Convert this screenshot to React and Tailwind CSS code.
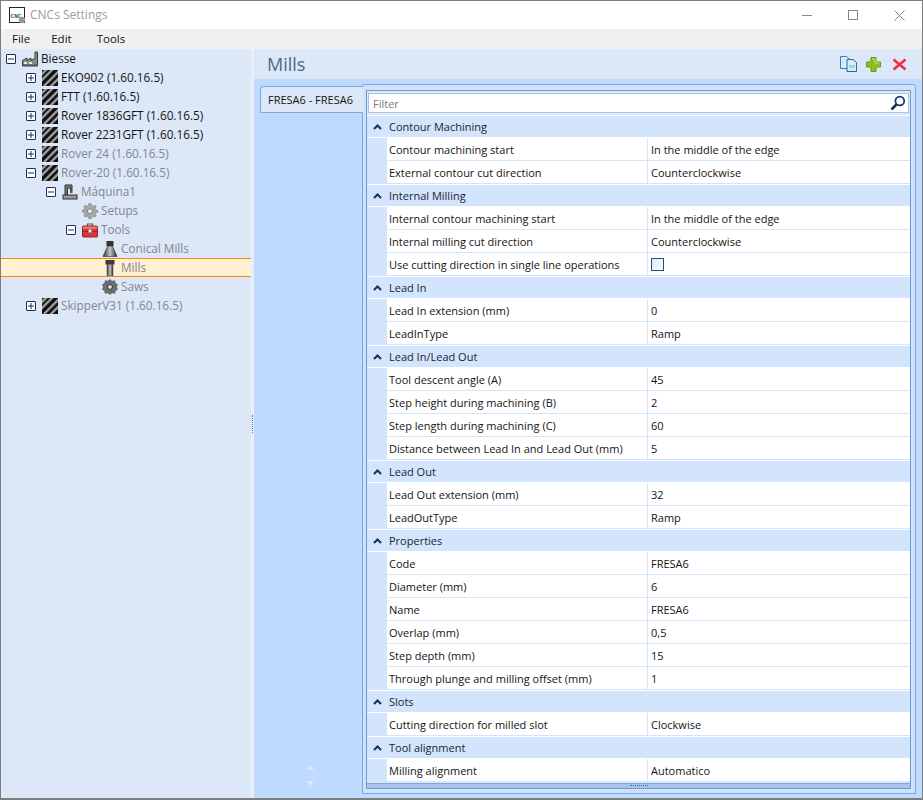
import React from "react";

const font = { fontFamily: '"Open Sans","Noto Sans",sans-serif' };

const PAD = ["pl-[5px]", "pl-[25px]", "pl-[45px]", "pl-[65px]", "pl-[85px]"];

function ExpandBox({ open }) {
  return (
    <svg width="10" height="10" viewBox="0 0 10 10" className="shrink-0">
      <rect x="0.5" y="0.5" width="9" height="9" fill="#fff" stroke="#1f2f55" strokeWidth="1" rx="0.5" />
      <rect x="2" y="4.5" width="6" height="1" fill="#1f2f55" />
      {!open && <rect x="4.5" y="2" width="1" height="6" fill="#1f2f55" />}
    </svg>
  );
}

function Striped() {
  return (
    <svg width="16" height="16" viewBox="0 0 16 16">
      <rect width="16" height="16" fill="#111" />
      <g stroke="#9a9a9a" strokeWidth="2.4">
        <path d="M-2 6 L6 -2" />
        <path d="M-2 12 L12 -2" />
        <path d="M2 16 L17 1" />
        <path d="M8 17 L17 8" />
      </g>
    </svg>
  );
}

function Factory() {
  return (
    <svg width="16" height="16" viewBox="0 0 16 16">
      <path d="M0.5 15V9.5L5 7V9.5L9 7V9.5L13 7.5V1H15.5V15Z" fill="#8a8a8a" stroke="#3c3c3c" strokeWidth="1" />
      <rect x="2" y="11" width="3" height="2" fill="#e6e6e6" />
      <rect x="7" y="11" width="3" height="2" fill="#e6e6e6" />
      <rect x="0.5" y="13.5" width="15" height="1.5" fill="#555" />
    </svg>
  );
}

function Machine() {
  return (
    <svg width="16" height="16" viewBox="0 0 16 16">
      <path d="M3 1H10V6H8.5V4H5.5V11H3Z" fill="#777" stroke="#333" strokeWidth="1" />
      <rect x="8" y="6" width="2.5" height="3" fill="#555" />
      <rect x="1" y="11" width="14" height="4" fill="#999" stroke="#333" strokeWidth="1" />
    </svg>
  );
}

function Gear() {
  return (
    <svg width="16" height="16" viewBox="0 0 16 16">
      <g fill="#a9a9a9" stroke="#7c7c7c" strokeWidth="0.7">
        <path d="M6.8 0.8H9.2L9.6 2.8L11.2 3.5L12.9 2.3L14.1 3.7L13 5.4L13.6 7L15.5 7.4V9.2L13.6 9.6L13 11.1L14.1 12.8L12.8 14.1L11.1 13L9.6 13.6L9.2 15.5H6.8L6.4 13.6L4.9 13L3.2 14.1L1.9 12.8L3 11.1L2.4 9.6L0.5 9.2V7L2.4 6.6L3 5.2L1.9 3.5L3.2 2.2L4.9 3.3L6.4 2.7Z" />
      </g>
      <circle cx="8" cy="8.2" r="2.6" fill="#e4e8ee" stroke="#777" strokeWidth="1" />
    </svg>
  );
}

function Toolbox() {
  return (
    <svg width="16" height="16" viewBox="0 0 16 16">
      <path d="M5.5 4V2H10.5V4" fill="none" stroke="#555" strokeWidth="1.2" />
      <rect x="0.5" y="4" width="15" height="11" rx="1" fill="#d8363a" stroke="#9c2226" strokeWidth="1" />
      <rect x="1" y="4.5" width="14" height="2.5" fill="#ee7075" />
      <rect x="1" y="9" width="14" height="1" fill="#a62327" />
      <rect x="6.5" y="7.5" width="3" height="3" fill="#f1f1f1" stroke="#888" strokeWidth="0.5" />
    </svg>
  );
}

function Conical() {
  return (
    <svg width="16" height="16" viewBox="0 0 16 16">
      <defs>
        <linearGradient id="cg" x1="0" x2="1">
          <stop offset="0" stopColor="#2a2a2a" />
          <stop offset="0.5" stopColor="#c4c4c4" />
          <stop offset="1" stopColor="#222" />
        </linearGradient>
      </defs>
      <rect x="4.5" y="0" width="7" height="5" fill="#333" />
      <path d="M5.5 5H10.5L15 15.5H1Z" fill="url(#cg)" stroke="#333" strokeWidth="0.6" />
    </svg>
  );
}

function Mill() {
  return (
    <svg width="16" height="16" viewBox="0 0 16 16">
      <defs>
        <linearGradient id="mg" x1="0" x2="1">
          <stop offset="0" stopColor="#333" />
          <stop offset="0.5" stopColor="#c8c8c8" />
          <stop offset="1" stopColor="#2c2c2c" />
        </linearGradient>
      </defs>
      <rect x="3.5" y="0" width="9" height="4.5" fill="#3a3a3a" />
      <rect x="5" y="4.5" width="6" height="11.5" fill="url(#mg)" stroke="#444" strokeWidth="0.5" />
    </svg>
  );
}

function Saw() {
  return (
    <svg width="16" height="16" viewBox="0 0 16 16">
      <path d="M8 0.5L10 2.2L12.7 1.8L13.2 4.3L15.5 5.6L14.4 8L15.5 10.4L13.3 11.7L12.7 14.3L10 13.8L8 15.5L6 13.8L3.3 14.3L2.7 11.7L0.5 10.4L1.6 8L0.5 5.6L2.8 4.3L3.3 1.8L6 2.2Z" fill="#6f6f6f" stroke="#444" strokeWidth="0.6" />
      <circle cx="8" cy="8" r="2.4" fill="#dfe6ef" stroke="#333" strokeWidth="1" />
    </svg>
  );
}

const ICONS = { factory: Factory, striped: Striped, machine: Machine, gear: Gear, toolbox: Toolbox, conical: Conical, mill: Mill, saw: Saw };

const TREE = [
  { l: 0, box: "open", icon: "factory", t: "Biesse" },
  { l: 1, box: "closed", icon: "striped", t: "EKO902 (1.60.16.5)" },
  { l: 1, box: "closed", icon: "striped", t: "FTT (1.60.16.5)" },
  { l: 1, box: "closed", icon: "striped", t: "Rover 1836GFT (1.60.16.5)" },
  { l: 1, box: "closed", icon: "striped", t: "Rover 2231GFT (1.60.16.5)" },
  { l: 1, box: "closed", icon: "striped", t: "Rover 24 (1.60.16.5)", dim: true },
  { l: 1, box: "open", icon: "striped", t: "Rover-20 (1.60.16.5)", dim: true },
  { l: 2, box: "open", icon: "machine", t: "Máquina1", dim: true },
  { l: 3, icon: "gear", t: "Setups", dim: true },
  { l: 3, box: "open", icon: "toolbox", t: "Tools", dim: true },
  { l: 4, icon: "conical", t: "Conical Mills", dim: true },
  { l: 4, icon: "mill", t: "Mills", dim: true, selected: true },
  { l: 4, icon: "saw", t: "Saws", dim: true },
  { l: 1, box: "closed", icon: "striped", t: "SkipperV31 (1.60.16.5)", dim: true },
];

const GROUPS = [
  ["Contour Machining", [["Contour machining start", "In the middle of the edge"], ["External contour cut direction", "Counterclockwise"]]],
  ["Internal Milling", [["Internal contour machining start", "In the middle of the edge"], ["Internal milling cut direction", "Counterclockwise"], ["Use cutting direction in single line operations", null]]],
  ["Lead In", [["Lead In extension (mm)", "0"], ["LeadInType", "Ramp"]]],
  ["Lead In/Lead Out", [["Tool descent angle (A)", "45"], ["Step height during machining (B)", "2"], ["Step length during machining (C)", "60"], ["Distance between Lead In and Lead Out (mm)", "5"]]],
  ["Lead Out", [["Lead Out extension (mm)", "32"], ["LeadOutType", "Ramp"]]],
  ["Properties", [["Code", "FRESA6"], ["Diameter (mm)", "6"], ["Name", "FRESA6"], ["Overlap (mm)", "0,5"], ["Step depth (mm)", "15"], ["Through plunge and milling offset (mm)", "1"]]],
  ["Slots", [["Cutting direction for milled slot", "Clockwise"]]],
  ["Tool alignment", [["Milling alignment", "Automatico"]]],
];

function TreeRow({ n }) {
  const Icon = ICONS[n.icon];
  return (
    <div className={`h-[19px] flex items-center text-[11.75px] ${PAD[n.l]} ${n.selected ? "bg-[#fff0d2] border-y border-[#f58a0b]" : ""}`}>
      <span className="w-[10px] h-[10px] shrink-0 flex">{n.box && <ExpandBox open={n.box === "open"} />}</span>
      <span className="ml-[6px] w-[16px] h-[16px] shrink-0 flex"><Icon /></span>
      <span className={`ml-[3px] whitespace-nowrap ${n.dim ? "text-[#85858f]" : "text-[#141414]"}`}>{n.t}</span>
    </div>
  );
}

function Group({ title, rows }) {
  return (
    <div>
      <div className="h-[23px] flex items-center bg-[#d3e5fc] border-y border-white text-[#1c2430]">
        <svg width="9" height="6" viewBox="0 0 9 6" className="ml-[6px] shrink-0">
          <path d="M1 5L4.5 1.5L8 5" fill="none" stroke="#16305e" strokeWidth="2" />
        </svg>
        <span className="ml-[7px]">{title}</span>
      </div>
      {rows.map(([k, v]) => (
        <div key={k} className="h-[23px] flex bg-[#d3e5fc]">
          <div className="w-[19px] shrink-0" />
          <div className="flex-1 flex bg-white border-l border-[#d3e5fc] border-b text-[#141414]">
            <div className="w-[261px] shrink-0 pl-[2px] flex items-center border-r border-[#d3e5fc] whitespace-nowrap overflow-hidden">{k}</div>
            <div className="flex-1 pl-[3px] flex items-center whitespace-nowrap">
              {v === null ? (
                <span className="w-[13px] h-[13px] border border-[#1c5187] bg-linear-to-br from-[#dfe5f2] to-white" />
              ) : v}
            </div>
          </div>
        </div>
      ))}
    </div>
  );
}

export default function App() {
  return (
    <div style={font} className="w-[923px] h-[800px] flex flex-col border border-[#7d7d7d] border-b-2 text-[11px] leading-none bg-white overflow-hidden">
      <div className="h-[28px] shrink-0 flex items-center bg-white">
        <svg width="17" height="17" viewBox="0 0 17 17" className="ml-[8px]">
          <rect x="0.5" y="0.5" width="15" height="15" fill="#fff" stroke="#222" />
          <text x="1.6" y="10.5" fontSize="6" fontWeight="700" fill="#127a21" fontFamily="Liberation Mono, monospace">CNC</text>
          <circle cx="13" cy="13" r="3.2" fill="#9a9a9a" />
        </svg>
        <span className="ml-[4px] text-[12px] text-[#9b9b9b]">CNCs Settings</span>
        <div className="ml-auto flex items-center">
          <div className="w-[46px] flex justify-center">
            <div className="w-[10px] h-px bg-[#8a8a8a]" />
          </div>
          <div className="w-[46px] flex justify-center">
            <div className="w-[10px] h-[10px] border border-[#8a8a8a]" />
          </div>
          <div className="w-[46px] flex justify-center">
            <svg width="11" height="11" viewBox="0 0 11 11"><path d="M0.5 0.5L10.5 10.5M10.5 0.5L0.5 10.5" stroke="#8a8a8a" /></svg>
          </div>
        </div>
      </div>

      <div className="h-[20px] shrink-0 flex items-center bg-[#f0f0f0] text-[#141414] text-[11.5px]">
        <span className="ml-[11px]">File</span>
        <span className="ml-[21px]">Edit</span>
        <span className="ml-[25px]">Tools</span>
      </div>

      <div className="flex-1 flex min-h-0">
        <div className="w-[250px] shrink-0 bg-[#dce8f7]">
          {TREE.map((n) => <TreeRow key={n.t} n={n} />)}
        </div>

        <div className="w-[3px] shrink-0 bg-[#e9eff8] flex items-center justify-center">
          <div className="h-[18px] w-px border-l border-dotted border-[#3f78c0]" />
        </div>

        <div className="flex-1 flex flex-col bg-[#bedafe] min-w-0">
          <div className="h-[30px] shrink-0 flex items-center bg-[#dce8f7]">
            <span className="ml-[13px] text-[18px] text-[#4a6a8c]">Mills</span>
            <div className="ml-auto flex items-center mr-[15px]">
              <svg width="17" height="16" viewBox="0 0 17 16">
                <path d="M0.5 0.5H6.5L9.5 3V12.5H0.5Z" fill="#d7ebf8" stroke="#2e83ba" />
                <path d="M7 3.5H13L16.5 6.5V15.5H7Z" fill="#d7ebf8" stroke="#1d6fa5" />
                <rect x="9" y="9" width="6" height="3" fill="#a7d0e8" />
              </svg>
              <svg width="15" height="15" viewBox="0 0 15 15" className="ml-[9px]">
                <path d="M5 0.5H10V5H14.5V10H10V14.5H5V10H0.5V5H5Z" fill="#8fbe21" stroke="#6d9a12" />
                <path d="M6 2H9V6H13" fill="none" stroke="#c4e56c" />
              </svg>
              <svg width="15" height="13" viewBox="0 0 15 13" className="ml-[11px]">
                <path d="M1.5 1.5L13.5 11.5M13.5 1.5L1.5 11.5" stroke="#f0303f" strokeWidth="2.6" />
              </svg>
            </div>
          </div>

          <div className="flex-1 flex min-h-0 pl-[6px] pr-[6px] pt-[5px] pb-[4px]">
            <div className="w-[102px] shrink-0 flex flex-col">
              <div className="mt-[2px] h-[27px] -mr-px relative z-10 flex items-center pl-[7px] bg-[#dce8f7] border border-r-0 border-[#7ea6da] rounded-tl-[4px] rounded-bl-[2px] text-[#141414] whitespace-nowrap">
                FRESA6 - FRESA6
              </div>
              <div className="mt-auto mb-[8px] pr-[2px] flex flex-col items-center gap-[11px]">
                <svg width="8" height="5" viewBox="0 0 8 5"><path d="M0 5L4 0L8 5Z" fill="#dbe9fb" /></svg>
                <svg width="8" height="5" viewBox="0 0 8 5"><path d="M0 0L4 5L8 0Z" fill="#dbe9fb" /></svg>
              </div>
            </div>

            <div className="flex-1 min-w-0 border border-[#7ea6da] rounded-tr-[3px] rounded-tl-[2px] bg-[#cfe2fc] pt-[5px] pl-[3px] pr-[4px] pb-[4px] flex">
              <div className="flex-1 min-w-0 border border-[#7298d0] bg-[#dce8f7] flex flex-col">
                <div className="mx-px mt-[2px] mb-[2px] h-[20px] shrink-0 flex items-center bg-white border border-[#a8c4ea] pl-[4px] text-[#7d7d7d]">
                  Filter
                  <svg width="16" height="16" viewBox="0 0 16 16" className="ml-auto mr-[2px]">
                    <circle cx="9.8" cy="6" r="4.4" fill="none" stroke="#183a66" strokeWidth="1.8" />
                    <path d="M6.4 9.5L1.5 14.5" stroke="#12305a" strokeWidth="2.6" />
                  </svg>
                </div>
                <div className="flex-1 min-h-0 overflow-hidden">
                  {GROUPS.map(([t, r]) => <Group key={t} title={t} rows={r} />)}
                </div>
                <div className="h-[5px] shrink-0 bg-[#a9c4ea] border-t border-[#7ea6da] flex justify-center">
                  <div className="w-[18px] h-px mt-[1px] border-t border-dotted border-[#2f6fc0]" />
                </div>
              </div>
            </div>
          </div>
        </div>
      </div>
    </div>
  );
}
